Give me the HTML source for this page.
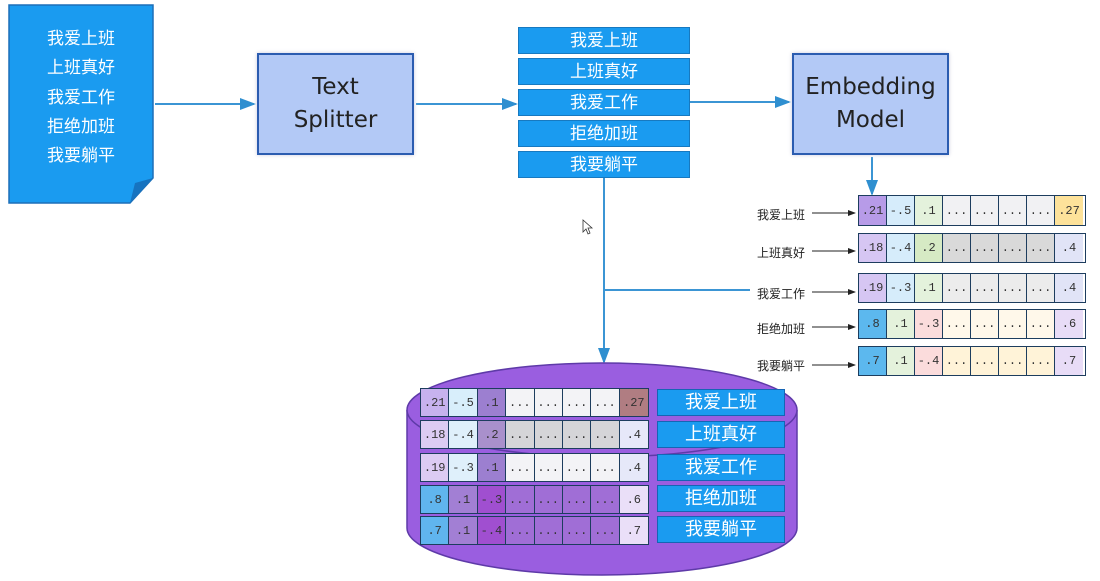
<!DOCTYPE html>
<html><head><meta charset="utf-8"><style>
*{margin:0;padding:0;box-sizing:border-box}
body{width:1100px;height:581px;background:#fff;position:relative;overflow:hidden;font-family:"Liberation Sans","Noto Sans CJK SC",sans-serif}
.abs{position:absolute}
.chunk{position:absolute;left:518px;width:172px;height:27px;background:#1a9bf0;border:1px solid #1779c0;color:#fff;font-size:17px;text-align:center;line-height:25px}
.box{position:absolute;width:157px;height:102px;background:#b3c9f6;border:2px solid #2b5cb0;font-size:23px;color:#222;text-align:center;display:flex;align-items:center;justify-content:center;line-height:33px;font-family:"DejaVu Sans",sans-serif;box-shadow:0 0 4px #ccd}
.row{position:absolute;display:flex;border:1.5px solid #1d3d5e}
.row div{height:100%;border-right:1.5px solid #1d3d5e;font-family:"Liberation Mono",monospace;font-size:12px;color:#333;display:flex;align-items:center;justify-content:center}
.row div:last-child{border-right:none}
.lbl{position:absolute;font-size:12px;color:#222}
.cl{position:absolute;left:657px;width:128px;height:27px;background:#1a9bf0;border:1px solid #1565b5;color:#fff;font-size:18px;text-align:center;line-height:25px}
</style></head><body>
<svg class="abs" style="left:0;top:0" width="1100" height="581">
<defs><marker id="a" markerWidth="8" markerHeight="8" refX="7" refY="4" orient="auto"><path d="M0,1 L8,4 L0,7z" fill="#2f8fd0"/></marker>
<marker id="b" markerWidth="8" markerHeight="8" refX="7" refY="4" orient="auto"><path d="M0,1 L8,4 L0,7z" fill="#222"/></marker></defs>
<path d="M9,5 H153 V178 L130,203 H9Z" fill="#1a9bf0" stroke="#1d6fb8" stroke-width="1.5"/>
<path d="M130,203 L135,183 L153,178Z" fill="#1673c0"/>
<g stroke="#3b95d4" stroke-width="2" fill="none">
<line x1="155" y1="104" x2="254" y2="104" marker-end="url(#a)"/>
<line x1="416" y1="104" x2="516" y2="104" marker-end="url(#a)"/>
<line x1="690" y1="102" x2="789" y2="102" marker-end="url(#a)"/>
<line x1="872" y1="157" x2="872" y2="194" marker-end="url(#a)"/>
<line x1="604" y1="178" x2="604" y2="362" marker-end="url(#a)"/>
<line x1="604" y1="290" x2="750" y2="290"/>
</g>
<g stroke="#222" stroke-width="1">
<line x1="812" y1="213" x2="855" y2="213" marker-end="url(#b)"/>
<line x1="812" y1="251" x2="855" y2="251" marker-end="url(#b)"/>
<line x1="812" y1="292" x2="855" y2="292" marker-end="url(#b)"/>
<line x1="812" y1="327" x2="855" y2="327" marker-end="url(#b)"/>
<line x1="812" y1="365" x2="855" y2="365" marker-end="url(#b)"/>
</g>
<path d="M407,410 V528 A195,47 0 0 0 797,528 V410" fill="#9a5ee0" stroke="#5e3aa8" stroke-width="1.5"/>
<ellipse cx="602" cy="410" rx="195" ry="47" fill="#9a5ee0" stroke="#5e3aa8" stroke-width="1.5"/>
<path d="M583,220 l0,12 l3,-3 l2,5 l2,-1 l-2,-5 l4,0z" fill="#fff" stroke="#333" stroke-width="0.8"/>
</svg>
<div class="abs" style="left:9px;top:24px;width:144px;text-align:center;color:#fff;font-size:17px;line-height:29.3px">我爱上班<br>上班真好<br>我爱工作<br>拒绝加班<br>我要躺平</div>
<div class="box" style="left:257px;top:53px">Text<br>Splitter</div>
<div class="box" style="left:792px;top:53px">Embedding<br>Model</div>
<div class="chunk" style="top:27px">我爱上班</div>
<div class="chunk" style="top:58px">上班真好</div>
<div class="chunk" style="top:89px">我爱工作</div>
<div class="chunk" style="top:120px">拒绝加班</div>
<div class="chunk" style="top:151px">我要躺平</div>

<div class="lbl" style="left:757px;top:206px">我爱上班</div>
<div class="lbl" style="left:757px;top:244px">上班真好</div>
<div class="lbl" style="left:757px;top:285px">我爱工作</div>
<div class="lbl" style="left:757px;top:320px">拒绝加班</div>
<div class="lbl" style="left:757px;top:357px">我要躺平</div>

<div class="row" style="left:858px;top:195px;width:228px;height:31px">
<div style="width:28px;background:#b79be8">.21</div><div style="width:28px;background:#d6ecfb">-.5</div><div style="width:28px;background:#e4f2dc">.1</div><div style="width:28px;background:#f1f1f3">...</div><div style="width:28px;background:#f1f1f3">...</div><div style="width:28px;background:#f1f1f3">...</div><div style="width:28px;background:#f1f1f3">...</div><div style="width:28px;background:#fde29a">.27</div></div>
<div class="row" style="left:858px;top:233px;width:228px;height:30px">
<div style="width:28px;background:#d6c6f3">.18</div><div style="width:28px;background:#d6ecfb">-.4</div><div style="width:28px;background:#d6eac4">.2</div><div style="width:28px;background:#d9d9d9">...</div><div style="width:28px;background:#d9d9d9">...</div><div style="width:28px;background:#d9d9d9">...</div><div style="width:28px;background:#d9d9d9">...</div><div style="width:28px;background:#e1e4f7">.4</div></div>
<div class="row" style="left:858px;top:273px;width:228px;height:30px">
<div style="width:28px;background:#d6c6f3">.19</div><div style="width:28px;background:#d6ecfb">-.3</div><div style="width:28px;background:#e4f2dc">.1</div><div style="width:28px;background:#ececec">...</div><div style="width:28px;background:#ececec">...</div><div style="width:28px;background:#ececec">...</div><div style="width:28px;background:#ececec">...</div><div style="width:28px;background:#e1e4f7">.4</div></div>
<div class="row" style="left:858px;top:309px;width:228px;height:30px">
<div style="width:28px;background:#5cb8ee">.8</div><div style="width:28px;background:#e4f2dc">.1</div><div style="width:28px;background:#fbdcdc">-.3</div><div style="width:28px;background:#fff8ea">...</div><div style="width:28px;background:#fff8ea">...</div><div style="width:28px;background:#fff8ea">...</div><div style="width:28px;background:#fff8ea">...</div><div style="width:28px;background:#e8dcf7">.6</div></div>
<div class="row" style="left:858px;top:346px;width:228px;height:30px">
<div style="width:28px;background:#5cb8ee">.7</div><div style="width:28px;background:#e4f2dc">.1</div><div style="width:28px;background:#fbdcdc">-.4</div><div style="width:28px;background:#fff3d8">...</div><div style="width:28px;background:#fff3d8">...</div><div style="width:28px;background:#fff3d8">...</div><div style="width:28px;background:#fff3d8">...</div><div style="width:28px;background:#e8dcf7">.7</div></div>

<div class="row" style="left:420px;top:388px;width:229px;height:29px">
<div style="width:28.5px;background:#c7b2ee">.21</div><div style="width:28.5px;background:#d8eefb">-.5</div><div style="width:28.5px;background:#9c7fd0">.1</div><div style="width:28.5px;background:#f3f3f6">...</div><div style="width:28.5px;background:#f3f3f6">...</div><div style="width:28.5px;background:#f3f3f6">...</div><div style="width:28.5px;background:#f3f3f6">...</div><div style="width:28.5px;background:#b07d82">.27</div></div>
<div class="row" style="left:420px;top:420px;width:229px;height:29px">
<div style="width:28.5px;background:#dccbf3">.18</div><div style="width:28.5px;background:#dff0fb">-.4</div><div style="width:28.5px;background:#a990cc">.2</div><div style="width:28.5px;background:#d5d5d8">...</div><div style="width:28.5px;background:#d5d5d8">...</div><div style="width:28.5px;background:#d5d5d8">...</div><div style="width:28.5px;background:#d5d5d8">...</div><div style="width:28.5px;background:#e6e8f9">.4</div></div>
<div class="row" style="left:420px;top:453px;width:229px;height:29px">
<div style="width:28.5px;background:#dccbf3">.19</div><div style="width:28.5px;background:#dff0fb">-.3</div><div style="width:28.5px;background:#9c7fd0">.1</div><div style="width:28.5px;background:#f3f3f6">...</div><div style="width:28.5px;background:#f3f3f6">...</div><div style="width:28.5px;background:#f3f3f6">...</div><div style="width:28.5px;background:#f3f3f6">...</div><div style="width:28.5px;background:#e6e8f9">.4</div></div>
<div class="row" style="left:420px;top:485px;width:229px;height:29px">
<div style="width:28.5px;background:#60b5ee">.8</div><div style="width:28.5px;background:#a27fd4">.1</div><div style="width:28.5px;background:#a04fd0">-.3</div><div style="width:28.5px;background:#a06ed6">...</div><div style="width:28.5px;background:#a06ed6">...</div><div style="width:28.5px;background:#a06ed6">...</div><div style="width:28.5px;background:#a06ed6">...</div><div style="width:28.5px;background:#eadff8">.6</div></div>
<div class="row" style="left:420px;top:516px;width:229px;height:29px">
<div style="width:28.5px;background:#60b5ee">.7</div><div style="width:28.5px;background:#a27fd4">.1</div><div style="width:28.5px;background:#a04fd0">-.4</div><div style="width:28.5px;background:#a06ed6">...</div><div style="width:28.5px;background:#a06ed6">...</div><div style="width:28.5px;background:#a06ed6">...</div><div style="width:28.5px;background:#a06ed6">...</div><div style="width:28.5px;background:#eadff8">.7</div></div>

<div class="cl" style="top:389px">我爱上班</div>
<div class="cl" style="top:421px">上班真好</div>
<div class="cl" style="top:454px">我爱工作</div>
<div class="cl" style="top:485px">拒绝加班</div>
<div class="cl" style="top:516px">我要躺平</div>
</body></html>
